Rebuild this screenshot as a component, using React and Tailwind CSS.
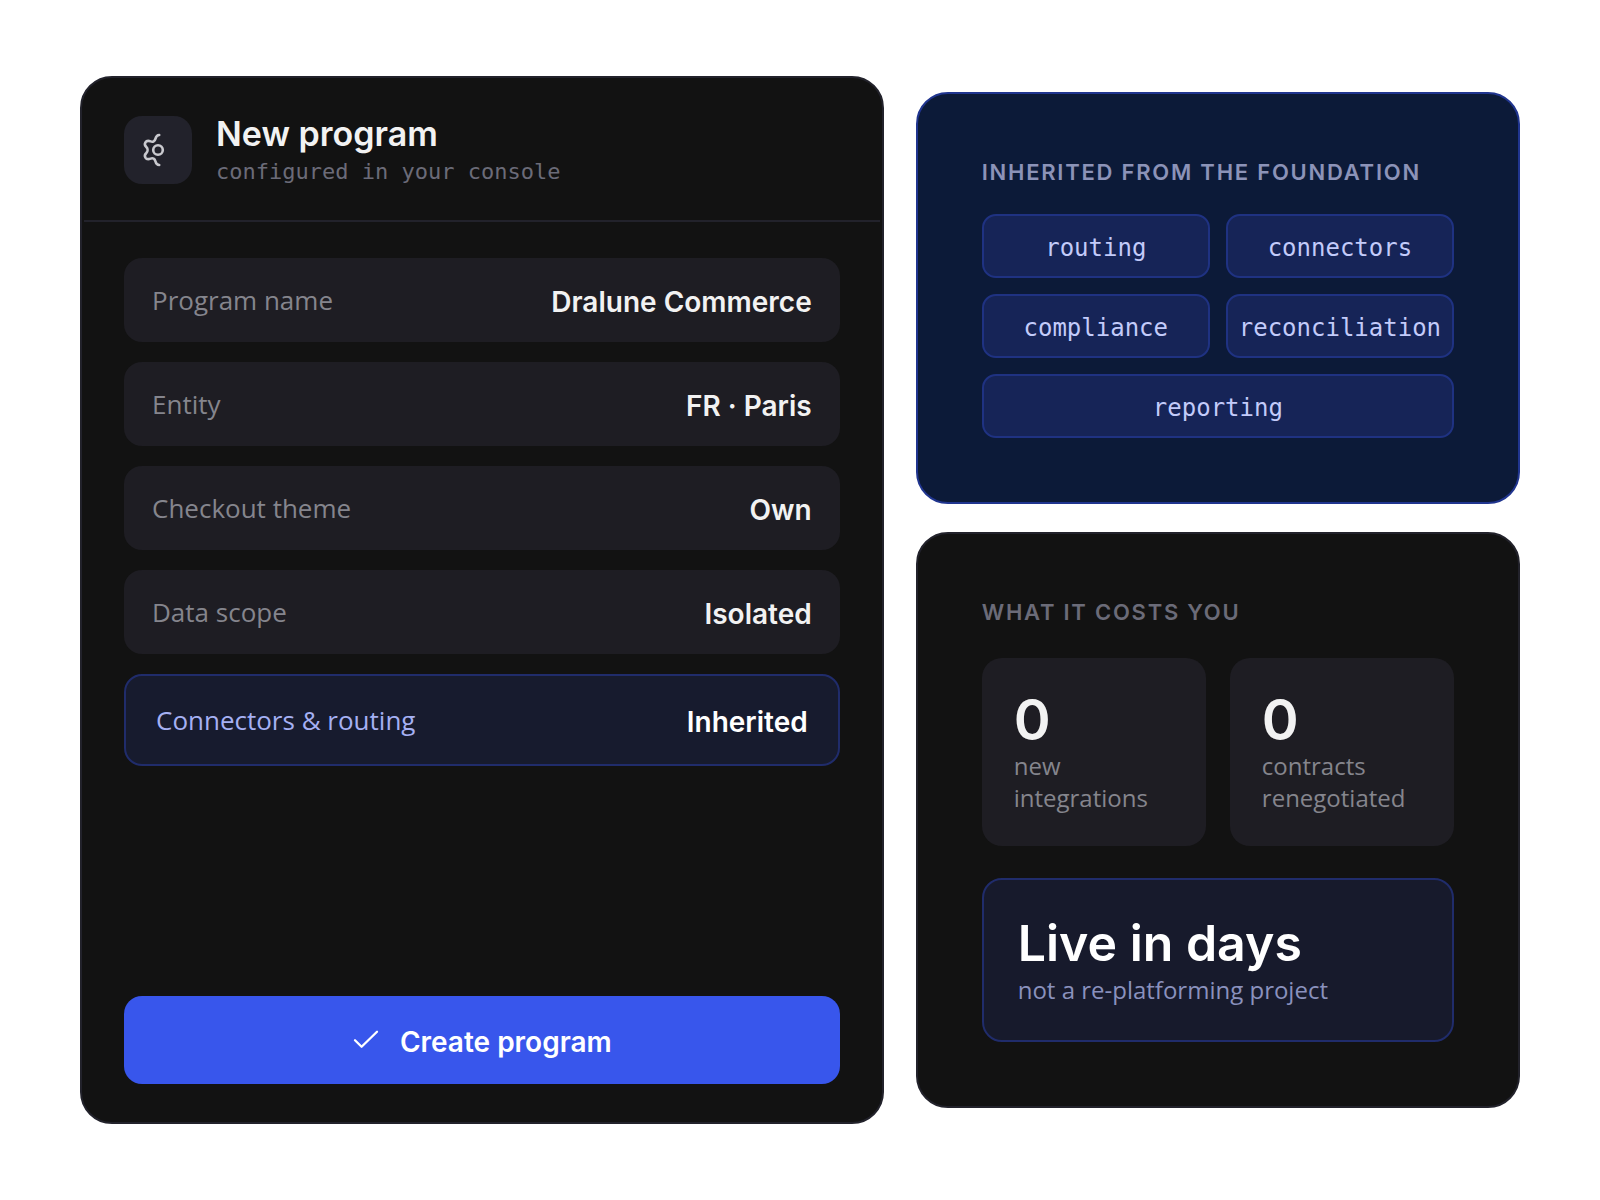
const HEADING = "font-['Inter',sans-serif] font-semibold";
const MONO = "font-['DejaVu_Sans_Mono',monospace]";

const fields = [
  ["Program name", "Dralune Commerce"],
  ["Entity", "FR · Paris"],
  ["Checkout theme", "Own"],
  ["Data scope", "Isolated"],
];

const inherited = ["routing", "connectors", "compliance", "reconciliation", "reporting"];

const costs = [
  ["0", "new integrations"],
  ["0", "contracts renegotiated"],
];

function GearIcon() {
  return (
    <svg
      className="size-9"
      viewBox="0 0 36 36"
      fill="none"
      stroke="#c9c9ce"
      strokeWidth="2.6"
      strokeLinecap="round"
      strokeLinejoin="round"
      aria-hidden="true"
    >
      <circle cx="18" cy="18" r="4.8" />
      <path d="M19.2 3C17 3 16 4.500 15.400 6.800C14.800 9.200 12.900 10.400 10.600 9.400C8.700 8.600 6.800 8.200 5.400 10.400C4.200 12.400 4.800 13.600 6.300 15C8 16.700 8 19.300 6.300 21C4.800 22.400 4.200 23.600 5.400 25.600C6.800 27.800 8.700 27.400 10.600 26.600C12.900 25.600 14.800 26.800 15.400 29.200C16 31.500 17 33 19.200 33" />
    </svg>
  );
}

function CheckIcon() {
  return (
    <svg
      className="size-7"
      viewBox="0 0 28 28"
      fill="none"
      stroke="currentColor"
      strokeWidth="2.300"
      strokeLinecap="round"
      strokeLinejoin="round"
      aria-hidden="true"
    >
      <path d="M3 14.200L9.600 20.700L25 5.700" />
    </svg>
  );
}

function ProgramCard() {
  return (
    <section className="flex min-h-[1048px] flex-col rounded-[32px] border-2 border-[#22222b] bg-[#121212] p-0.5">
      <header className="flex items-center gap-6 border-b-2 border-[#22222b] px-10 py-8">
        <div className="flex size-[68px] shrink-0 items-center justify-center rounded-[18px] bg-[#22222b]">
          <GearIcon />
        </div>
        <div>
          <h1 className={`${HEADING} text-[34px] leading-[44px] text-[#f2f2f2]`}>New program</h1>
          <p className={`${MONO} text-[22px] leading-8 text-[#6b6b78]`}>configured in your console</p>
        </div>
      </header>
      <div className="flex grow flex-col justify-between gap-10 px-10 pt-9 pb-9">
        <dl className="flex flex-col gap-5">
          {fields.map(([label, value]) => (
            <div
              key={label}
              className="flex min-h-[84px] items-center justify-between gap-4 rounded-[18px] bg-[#1e1d23] px-7"
            >
              <dt className="text-[26px] leading-9 text-[#85858d]">{label}</dt>
              <dd className={`${HEADING} pt-1 text-right text-[28px] leading-9 text-[#f2f2f2]`}>{value}</dd>
            </div>
          ))}
          <div className="flex min-h-[92px] items-center justify-between gap-4 rounded-[18px] border-2 border-[#202c6b] bg-[#171b2e] px-[30px]">
            <dt className="text-[26px] leading-9 text-[#a5b0f3]">Connectors &amp; routing</dt>
            <dd className={`${HEADING} pt-1 text-right text-[28px] leading-9 text-white`}>Inherited</dd>
          </div>
        </dl>
        <button
          type="button"
          className={`${HEADING} flex h-[88px] w-full cursor-pointer items-center justify-center gap-5 rounded-[18px] bg-[#3856ec] text-[28px] leading-9 text-white`}
        >
          <CheckIcon />
          <span className="pt-1">Create program</span>
        </button>
      </div>
    </section>
  );
}

function InheritedCard() {
  return (
    <section className="rounded-[32px] border-2 border-[#20358f] bg-[#0c1a38] p-16">
      <h2 className={`${HEADING} mb-7 text-[22px] leading-7 tracking-[0.08em] text-[#8c93b8] uppercase`}>
        Inherited from the foundation
      </h2>
      <ul className="grid grid-cols-2 gap-4">
        {inherited.map((name) => (
          <li
            key={name}
            className={`${MONO} flex h-16 items-center justify-center rounded-[14px] border-2 border-[#1f3282] bg-[#162457] pt-1 text-[24px] leading-8 text-[#c3cbfa] last:col-span-2`}
          >
            {name}
          </li>
        ))}
      </ul>
    </section>
  );
}

function CostCard() {
  return (
    <section className="rounded-[32px] border-2 border-[#22222b] bg-[#121212] p-16">
      <h2 className={`${HEADING} mb-8 text-[22px] leading-7 tracking-[0.08em] text-[#6b6b78] uppercase`}>
        What it costs you
      </h2>
      <div className="grid grid-cols-2 gap-6">
        {costs.map(([count, label]) => (
          <div key={label} className="min-h-[188px] rounded-[20px] bg-[#1e1d23] px-8 pt-8 pb-7">
            <p className={`${HEADING} text-[56px] leading-[60px] text-[#f2f2f2]`}>{count}</p>
            <p className="w-min text-[24px] leading-8 text-[#85858d]">{label}</p>
          </div>
        ))}
      </div>
      <div className="mt-8 min-h-[164px] rounded-[20px] border-2 border-[#202c6b] bg-[#171a2c] px-[34px] py-8">
        <p className={`${HEADING} text-[50px] leading-[62px] text-white`}>Live in days</p>
        <p className="text-[24px] leading-8 text-[#8a91bd]">not a re-platforming project</p>
      </div>
    </section>
  );
}

export default function App() {
  return (
    <main className="grid min-h-screen grid-cols-[1.33fr_1fr] items-center gap-8 bg-white px-20 py-8 font-['Open_Sans',sans-serif]">
      <ProgramCard />
      <div className="flex flex-col gap-7">
        <InheritedCard />
        <CostCard />
      </div>
    </main>
  );
}
